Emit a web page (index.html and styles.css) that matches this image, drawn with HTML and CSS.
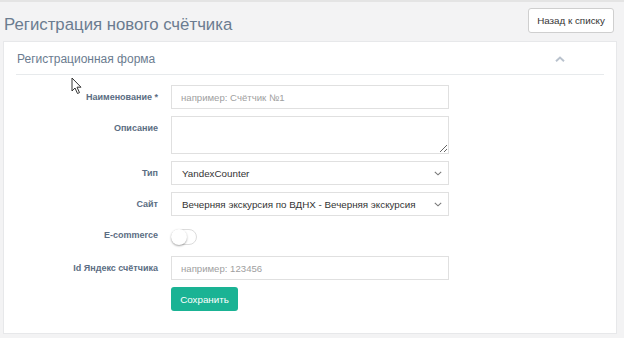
FILE: index.html
```html
<!DOCTYPE html>
<html lang="ru">
<head>
<meta charset="utf-8">
<title>Регистрация нового счётчика</title>
<link rel="stylesheet" href="styles.css">
</head>
<body>
<div class="topline"></div>
<div class="page-head">
  <h1 class="page-title">Регистрация нового счётчика</h1>
  <button class="btn-back" type="button">Назад к списку</button>
</div>
<div class="wrapper">
  <div class="panel">
    <div class="panel-head">
      <span class="panel-title">Регистрационная форма</span>
      <svg class="chevron" width="10" height="6" viewBox="0 0 10 6"><path d="M1 5.2 L5 1.6 L9 5.2" fill="none" stroke="#b9c2cd" stroke-width="2"/></svg>
    </div>
    <form class="form">
      <div class="row">
        <label class="lbl">Наименование *</label>
        <div class="ctl"><input class="inp" type="text" placeholder="например: Счётчик №1"></div>
      </div>
      <div class="row">
        <label class="lbl">Описание</label>
        <div class="ctl"><textarea class="inp area"></textarea></div>
      </div>
      <div class="row">
        <label class="lbl">Тип</label>
        <div class="ctl sel"><span>YandexCounter</span>
          <svg class="caret" width="8" height="5" viewBox="0 0 8 5"><path d="M0.8 0.8 L4 3.8 L7.2 0.8" fill="none" stroke="#777" stroke-width="1.1"/></svg></div>
      </div>
      <div class="row">
        <label class="lbl">Сайт</label>
        <div class="ctl sel"><span>Вечерняя экскурсия по ВДНХ - Вечерняя экскурсия</span>
          <svg class="caret" width="8" height="5" viewBox="0 0 8 5"><path d="M0.8 0.8 L4 3.8 L7.2 0.8" fill="none" stroke="#777" stroke-width="1.1"/></svg></div>
      </div>
      <div class="row row-toggle">
        <label class="lbl">E-commerce</label>
        <div class="ctl"><span class="toggle"><span class="knob"></span></span></div>
      </div>
      <div class="row">
        <label class="lbl">Id Яндекс счётчика</label>
        <div class="ctl"><input class="inp" type="text" placeholder="например: 123456"></div>
      </div>
      <div class="row">
        <span class="lbl"></span>
        <div class="ctl"><button class="btn-save" type="button">Сохранить</button></div>
      </div>
    </form>
  </div>
</div>
<svg class="cursor" width="12" height="18" viewBox="0 0 12 18"><path d="M1 1 L1 14 L4 11 L6.5 16.5 L8.5 15.6 L6 10.2 L10 10.2 Z" fill="#fff" stroke="#333" stroke-width="1"/></svg>
</body>
</html>
```
FILE: styles.css
```css
* { box-sizing: border-box; }
html, body { margin: 0; padding: 0; }
body {
  background: #f3f3f4;
  font-family: "Liberation Sans", Arial, sans-serif;
  width: 624px;
  height: 338px;
  overflow: hidden;
  position: relative;
}
.topline { height: 2px; background: #e4e4e4; }
.page-head {
  display: flex;
  justify-content: space-between;
  align-items: flex-start;
  padding: 6px 10px 0 4px;
  height: 39px;
}
.page-title {
  margin: 7px 0 0;
  font-size: 16.8px;
  font-weight: normal;
  color: #6b7c90;
}
.btn-back {
  height: 25px;
  width: 86px;
  padding: 0;
  background: #fff;
  border: 1px solid #cfcfcf;
  border-radius: 3px;
  font-family: inherit;
  font-size: 9.8px;
  color: #333;
}
.wrapper { padding: 0 7px 0 3px; }
.panel {
  background: #fff;
  border: 1px solid #e7e8ea;
  height: 293px;
  padding: 0 12px;
}
.panel-head {
  display: flex;
  justify-content: space-between;
  align-items: center;
  height: 33px;
  border-bottom: 1px solid #e7eaec;
  padding: 1px 39px 0 1px;
}
.panel-title { font-size: 12px; color: #6b7c90; }
.form { padding-top: 10px; }
.row {
  display: flex;
  align-items: flex-start;
  margin-bottom: 7px;
}
.lbl {
  width: 142px;
  flex: none;
  text-align: right;
  font-size: 9px;
  font-weight: bold;
  color: #5b6d83;
  padding-top: 6px;
  line-height: 12px;
  margin-right: 13px;
}
.ctl { width: 278px; flex: none; }
.inp {
  display: block;
  width: 100%;
  height: 24px;
  border: 1px solid #e0e0e0;
  padding: 0 9px;
  font-family: inherit;
  font-size: 9.6px;
  color: #333;
  background: #fff;
  outline: none;
}
.inp::placeholder { color: #a0a0a0; }
.area { height: 38px; resize: vertical; }
.sel {
  height: 24px;
  border: 1px solid #e0e0e0;
  display: flex;
  align-items: center;
  justify-content: space-between;
  padding: 0 6px 0 10px;
  font-size: 9.8px;
  color: #333;
  white-space: nowrap;
}
.caret { margin-top: 1px; }
.row-toggle { height: 26px; }
.toggle {
  display: block;
  margin-top: 6px;
  width: 26px;
  height: 16px;
  border: 1px solid #dcdcdc;
  border-radius: 8px;
  background: #fff;
  position: relative;
}
.knob {
  position: absolute;
  left: -1px;
  top: -1px;
  width: 16px;
  height: 16px;
  border-radius: 50%;
  background: #fff;
  box-shadow: 0 1px 2px rgba(0,0,0,0.35);
}
.btn-save {
  width: 67px;
  height: 24px;
  padding: 0;
  border: none;
  border-radius: 3px;
  background: #1ab394;
  color: #fff;
  font-family: inherit;
  font-size: 9.8px;
}
.cursor { position: absolute; left: 71px; top: 77px; }
```
